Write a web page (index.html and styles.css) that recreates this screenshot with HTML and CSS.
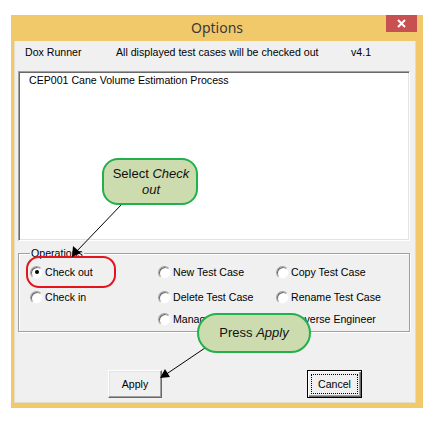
FILE: index.html
```html
<!DOCTYPE html>
<html lang="en">
<head>
    <meta charset="UTF-8">
    <meta name="viewport" content="width=device-width, initial-scale=1.0">
    <title>Options</title>
    <link rel="stylesheet" href="styles.css">
</head>
<body>
    <div class="window">
        <div class="titlebar">
            <span></span>
            <span class="title">Options</span>
            <span class="close">
                <svg width="9" height="9" viewBox="0 0 9 9">
                    <path d="M1 1 L8 8 M8 1 L1 8" stroke="#fff" stroke-width="2" fill="none"/>
                </svg>
            </span>
        </div>
        <div class="client">
            <div class="info">
                <span>Dox Runner</span>
                <span>All displayed test cases will be checked out</span>
                <span>v4.1</span>
            </div>
            <div class="listbox">
                <div class="item">CEP001 Cane Volume Estimation Process</div>
            </div>
            <fieldset class="ops">
                <legend>Operations</legend>
                <div class="radios">
                    <label class="radio"><span class="dot checked"></span>Check out</label>
                    <label class="radio"><span class="dot"></span>New Test Case</label>
                    <label class="radio"><span class="dot"></span>Copy Test Case</label>
                    <label class="radio"><span class="dot"></span>Check in</label>
                    <label class="radio"><span class="dot"></span>Delete Test Case</label>
                    <label class="radio"><span class="dot"></span>Rename Test Case</label>
                    <span></span>
                    <label class="radio"><span class="dot"></span>Manage Test Cases</label>
                    <label class="radio"><span class="dot"></span>Reverse Engineer</label>
                </div>
            </fieldset>
            <div class="buttons">
                <button class="btn">Apply</button>
                <button class="btn default"><span class="focus">Cancel</span></button>
            </div>
        </div>
    </div>

    <!-- annotations drawn over the dialog -->
    <div class="ring"></div>
    <svg class="arrows" width="435" height="427" viewBox="0 0 435 427">
        <line x1="122" y1="204" x2="76" y2="252" stroke="#000" stroke-width="1"/>
        <polygon points="72,257 73,246 81,253" fill="#000"/>
        <line x1="205" y1="348" x2="165" y2="375" stroke="#000" stroke-width="1"/>
        <polygon points="160,378 165,369 170,377" fill="#000"/>
    </svg>
    <div class="callout select"><span>Select <i>Check<br>out</i></span></div>
    <div class="callout apply"><span>Press <i>Apply</i></span></div>
</body>
</html>
```

FILE: styles.css
```css
body {
    margin: 0;
    background: #fff;
    font-family: "Liberation Sans", Arial, sans-serif;
    position: relative;
    width: 435px;
    height: 427px;
}
.window {
    margin: 15px 0 0 11px;
    width: 412px;
    height: 393px;
    background: #f1c96b;
}
.titlebar {
    height: 26px;
    display: grid;
    grid-template-columns: 1fr auto 1fr;
    align-items: start;
}
.title {
    font-family: "Noto Sans", "Open Sans", sans-serif;
    font-size: 14px;
    line-height: 24px;
    color: #3a3a3a;
    padding-top: 1px;
}
.close {
    justify-self: end;
    margin-right: 6px;
    width: 31px;
    height: 17px;
    background: #c75050;
    display: flex;
    align-items: center;
    justify-content: center;
}
.client {
    margin: 0 7px 0 3px;
    height: 362px;
    box-sizing: border-box;
    background: #f0f0f0;
    border: 1px solid #e2dccb;
    border-top: none;
    padding: 0 5px 0 3px;
    font-size: 10.6px;
    color: #000;
}
.info {
    height: 30px;
    display: grid;
    grid-template-columns: 91px 235px auto;
    padding-left: 7px;
    padding-top: 4px;
    box-sizing: border-box;
    line-height: 14px;
}
.listbox {
    height: 170px;
    box-sizing: border-box;
    background: #fff;
    border: 1px solid;
    border-color: #a0a0a0 #fff #fff #a0a0a0;
    box-shadow: inset 1px 1px 0 #696969, inset -1px -1px 0 #e3e3e3;
    padding: 1px 0 0 10px;
    line-height: 14px;
}
.ops {
    margin: 5px 0 0 0;
    padding: 5px 0 5px 11px;
    border: 1px solid #a0a0a0;
    box-shadow: 1px 1px 0 #fff, inset 1px 1px 0 #fff;
    min-width: 0;
}
.ops legend {
    padding: 0 1px;
    line-height: 14px;
}
.radios {
    display: grid;
    grid-template-columns: 128px 118px auto;
    grid-template-rows: 25px 22px 14px;
    line-height: 14px;
}
.radio {
    display: flex;
    align-items: center;
    height: 14px;
    gap: 2px;
}
.dot {
    width: 13px;
    height: 13px;
    box-sizing: border-box;
    border-radius: 50%;
    background: #fff;
    border: 1px solid;
    border-color: #a0a0a0 #f4f4f4 #f4f4f4 #a0a0a0;
    box-shadow: inset 1px 1px 0 #6a6a6a;
    display: flex;
    align-items: center;
    justify-content: center;
}
.dot.checked::after {
    content: "";
    width: 4px;
    height: 4px;
    border-radius: 50%;
    background: #000;
}
.buttons {
    display: flex;
    gap: 145px;
    padding-left: 90px;
    margin-top: 38px;
}
.btn {
    height: 28px;
    width: 54px;
    padding: 0;
    font-family: inherit;
    font-size: 10.6px;
    color: #000;
    background: #f0f0f0;
    border: 1px solid;
    border-color: #fff #696969 #696969 #fff;
    box-shadow: inset -1px -1px 0 #a0a0a0, inset 1px 1px 0 #e3e3e3;
}
.btn.default {
    width: 55px;
    border: 1px solid #000;
    box-shadow: inset 1px 1px 0 #fff, inset -1px -1px 0 #696969, inset -2px -2px 0 #a0a0a0;
    padding: 3px;
}
.focus {
    display: flex;
    align-items: center;
    justify-content: center;
    height: 100%;
    border: 1px dotted #000;
    box-sizing: border-box;
}
.ring {
    position: absolute;
    left: 26px;
    top: 256px;
    width: 90px;
    height: 32px;
    box-sizing: border-box;
    border: 2.5px solid #e4141b;
    border-radius: 13px;
}
.arrows {
    position: absolute;
    left: 0;
    top: 0;
}
.callout {
    position: absolute;
    box-sizing: border-box;
    background: #cddcae;
    border: 2px solid #22b04e;
    font-size: 13px;
    line-height: 16px;
    color: #111;
    text-align: center;
    display: flex;
    align-items: center;
    justify-content: center;
}
.callout.select {
    left: 102px;
    top: 158px;
    width: 96px;
    height: 47px;
    border-radius: 16px;
}
.callout.select span {
    padding-left: 2px;
}
.callout.apply {
    left: 197px;
    top: 313px;
    width: 114px;
    height: 40px;
    border-radius: 20px;
}
```
